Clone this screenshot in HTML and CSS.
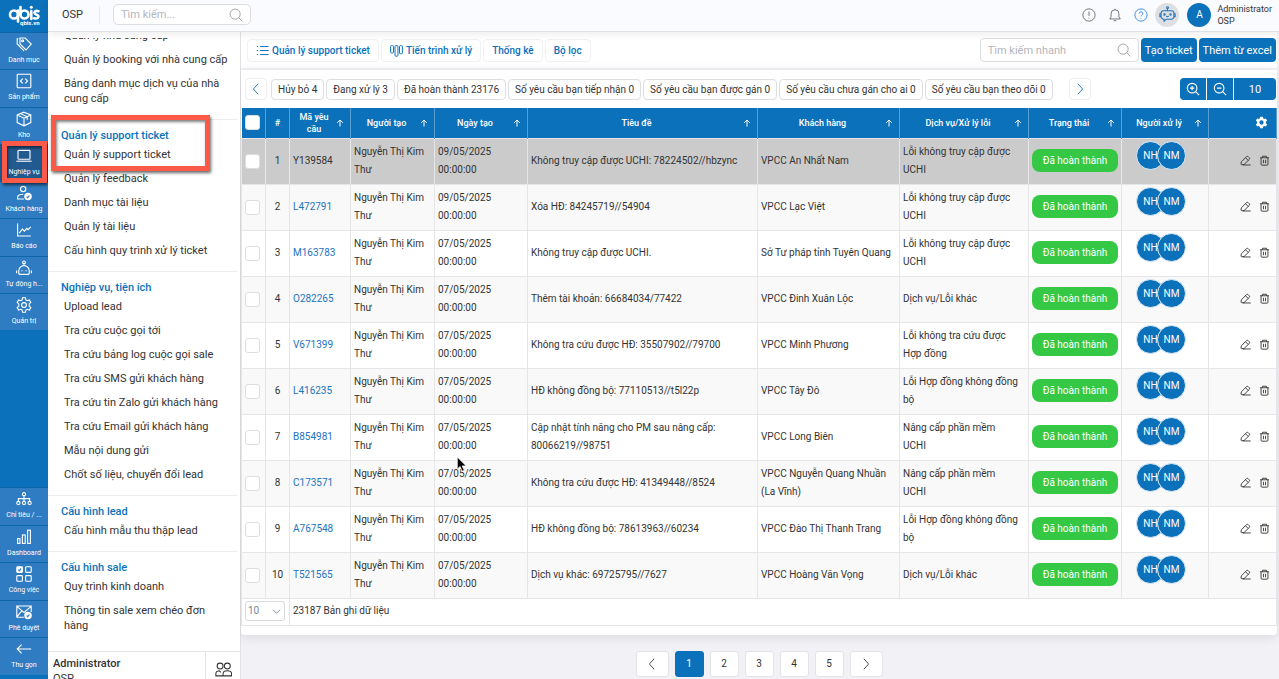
FILE: index.html
```html
<!DOCTYPE html>
<html lang="vi">
<head>
    <meta charset="UTF-8">
    <meta name="viewport" content="width=device-width, initial-scale=1.0">
    <title>Quản lý support ticket</title>
    <link rel="stylesheet" href="styles.css">
</head>
<body>
    <!-- shared icons -->
    <svg class="sprite" aria-hidden="true">
        <symbol id="i-search" viewBox="0 0 16 16"><circle cx="7" cy="7" r="5.8"/><path d="M11.200 11.200l4 4"/></symbol>
        <symbol id="i-left" viewBox="0 0 16 16"><path d="M10.5 2L5 8l5.5 6"/></symbol>
        <symbol id="i-right" viewBox="0 0 16 16"><path d="M5.5 2L11 8l-5.5 6"/></symbol>
        <symbol id="i-sort" viewBox="0 0 8 8"><path d="M4 7.5V1M1.2 3.8L4 1l2.8 2.8"/></symbol>
        <symbol id="i-edit" viewBox="0 0 16 16"><path d="M4 14.500h11.500M1.500 13.200l.3-3.200 7.700-7.600q1.200-1 2.400 0l1.600 1.600q1 1.200 0 2.400L5.800 14H2.300q-.8 0-.8-.8zM8 4l4 4"/></symbol>
        <symbol id="i-trash" viewBox="0 0 16 16"><path d="M1.500 4h13M5 4V1.8h6V4M3 4v9.5q0 1.3 1.3 1.3h7.4q1.3 0 1.3-1.3V4M6.5 7v5M9.5 7v5"/></symbol>
        <symbol id="i-robot" viewBox="0 0 20 20"><path d="M10 3v2.500M5.500 5.500h9a3 3 0 0 1 3 3v4a3 3 0 0 1-3 3H8.500L6 18v-2.500h-.5a3 3 0 0 1-3-3v-4a3 3 0 0 1 3-3zM2.500 9H1v3.500h1.500M17.500 9H19v3.500h-1.500M8.500 12q1.500 1.300 3 0"/><circle cx="10" cy="2" r="1.100"/><circle cx="6.500" cy="10" r=".8"/><circle cx="13.500" cy="10" r=".8"/></symbol>
    </svg>

    <div class="app">
        <nav class="rail">
            <a class="logo" href="#" aria-label="qbis.vn">
                <svg viewBox="0 0 48 32">
                    <g fill="none" stroke="#fff" stroke-width="2.600" stroke-linecap="round">
                        <circle cx="14" cy="14.500" r="4"/><path d="M18 10.500v11"/>
                        <path d="M20.500 7v8"/><circle cx="24.500" cy="14.500" r="4"/>
                        <path d="M31.300 11v8M38.500 11.200c-4-1.300-5.300 2-2.500 3.200 4 1 3 5-2 3.900"/>
                    </g>
                    <circle cx="31.300" cy="7.300" r="1.500" fill="#fff"/>
                    <text x="20" y="25">qbis.vn</text>
                </svg>
            </a>
            <div class="rail-group">
                <a class="rail-item" href="#"><svg viewBox="0 0 20 20"><path d="M5 2.500h6.500l7.500 7.500-6.500 7.500L5 10zM3 3.500H1.500V10l8.500 8.500"/><circle cx="8.300" cy="6" r="1.200"/></svg><span>Danh mục</span></a>
                <a class="rail-item" href="#"><svg viewBox="0 0 20 20"><rect x="1.500" y="1.500" width="17" height="17" rx="1"/><path d="M8.500 7L5.500 10l3 3M11.500 7l3 3-3 3"/></svg><span>Sản phẩm</span></a>
                <a class="rail-item" href="#"><svg viewBox="0 0 20 20"><path d="M10 1.500l8.500 3.500v9.500L10 18.500l-8.500-4V5zM1.500 5l8.500 4 8.500-4M10 9v9.500M5.500 3.200l8.500 4V11"/></svg><span>Kho</span></a>
                <a class="rail-item active" href="#"><svg viewBox="0 0 20 20"><rect x="2.500" y="3" width="15" height="11" rx="1"/><path d="M.5 16.500h19"/></svg><span>Nghiệp vụ</span></a>
                <a class="rail-item" href="#"><svg viewBox="0 0 20 20"><circle cx="9" cy="5" r="3.300"/><path d="M10 17.500H2V15.500q0-4 7-4"/><circle cx="15" cy="14.500" r="4" fill="#fff"/><path class="tick" d="M13.300 14.500l1.300 1.300 2.200-2.600"/></svg><span>Khách hàng</span></a>
                <a class="rail-item" href="#"><svg viewBox="0 0 20 20"><path d="M2 2v15.500H18.500M4 14l4-5 2.500 2.500 3-3.500 1.500 1.500L18.500 6"/></svg><span>Báo cáo</span></a>
                <a class="rail-item" href="#"><svg viewBox="0 0 20 20"><path d="M10 4v3M3.500 17v-3.500a6.500 6.500 0 0 1 13 0V17q0 1-1 1h-11q-1 0-1-1zM.8 13v3.500M19.200 13v3.500"/><circle cx="10" cy="3" r="1.700"/><path d="M7.500 13v1M12.500 13v1" stroke-width="2.200"/></svg><span>Tự động h...</span></a>
                <a class="rail-item" href="#"><svg viewBox="0 0 20 20"><path d="M8.200 1h3.600l.5 2.600 1.800 1 2.600-.9 1.800 3.100-2 1.800v2.800l2 1.800-1.800 3.100-2.600-.9-1.800 1-.5 2.600H8.200l-.5-2.600-1.800-1-2.600.9-1.800-3.100 2-1.800V8.600l-2-1.800 1.800-3.100 2.600.9 1.800-1z"/><circle cx="10" cy="10" r="3"/></svg><span>Quản trị</span></a>
            </div>
            <div class="rail-group rail-bottom">
                <a class="rail-item" href="#"><svg viewBox="0 0 20 20"><circle cx="10" cy="4" r="2"/><circle cx="3" cy="15" r="2"/><circle cx="10" cy="15" r="2"/><circle cx="17" cy="15" r="2"/><path d="M10 6v7M3 13v-3.500h14V13"/></svg><span>Chỉ tiêu / ...</span></a>
                <a class="rail-item" href="#"><svg viewBox="0 0 20 20"><rect x="2" y="12" width="3" height="6"/><rect x="8" y="7.500" width="3.500" height="10.500"/><rect x="14.500" y="1.500" width="3.500" height="16.500"/></svg><span>Dashboard</span></a>
                <a class="rail-item" href="#"><svg viewBox="0 0 20 20"><rect x="1" y="1" width="7" height="7" rx="1" fill="#fff"/><rect x="12" y="1" width="7" height="7" rx="1"/><rect x="1" y="12" width="7" height="7" rx="1"/><rect x="12" y="12" width="7" height="7" rx="1"/><path class="tick" d="M2.800 4.500l1.500 1.500 2-3"/></svg><span>Công việc</span></a>
                <a class="rail-item" href="#"><svg viewBox="0 0 20 20"><path d="M10 16.500H1v-14h18V10M1 3l9 7.500L19 3M1 16l6-7"/><circle cx="15" cy="14.500" r="4" fill="#fff"/><path class="tick" d="M13.300 14.500l1.300 1.300 2.200-2.600"/></svg><span>Phê duyệt</span></a>
                <a class="rail-item" href="#"><svg viewBox="0 0 20 20"><path d="M19 10H1.500M7 4.500L1.500 10 7 15.500"/></svg><span>Thu gọn</span></a>
            </div>
            <div class="mark mark-rail"></div>
        </nav>

        <div class="page">
            <header class="topbar">
                <span class="brand">OSP</span>
                <label class="search top-search">
                    <input type="text" placeholder="Tìm kiếm..." aria-label="Tìm kiếm">
                    <svg class="ico"><use href="#i-search"/></svg>
                </label>
                <div class="top-actions">
                    <button class="icon-btn" aria-label="Thông báo"><svg class="ico" viewBox="0 0 16 16"><circle cx="8" cy="8" r="7"/><path d="M8 4v5M8 11v1"/></svg></button>
                    <button class="icon-btn" aria-label="Chuông"><svg class="ico" viewBox="0 0 16 16"><path d="M2 12.500h12L12.500 10V6.500a4.500 4.500 0 0 0-9 0V10zM6.500 14.500h3M8 2V.8"/></svg></button>
                    <button class="icon-btn help" aria-label="Trợ giúp"><svg class="ico" viewBox="0 0 16 16"><circle cx="8" cy="8" r="7"/><path d="M6 6.300a2 2 0 1 1 2.800 1.900Q8 8.600 8 9.500M8 11.300v.9"/></svg></button>
                    <button class="icon-btn bot" aria-label="Trợ lý"><svg class="ico"><use href="#i-robot"/></svg></button>
                    <span class="avatar">A</span>
                    <div class="user"><div>Administrator</div><div>OSP</div></div>
                </div>
            </header>

            <div class="body">
                <aside class="menu">
                    <div class="menu-scroll">
                        <div class="menu-list">
                            <div class="menu-group first">
                                <a href="#">Quản lý nhà cung cấp</a>
                                <a href="#">Quản lý booking với nhà cung cấp</a>
                                <a href="#">Bảng danh mục dịch vụ của nhà cung cấp</a>
                            </div>
                            <div class="menu-group">
                                <h3>Quản lý support ticket</h3>
                                <a href="#">Quản lý support ticket</a>
                                <a href="#">Quản lý feedback</a>
                                <a href="#">Danh mục tài liệu</a>
                                <a href="#">Quản lý tài liệu</a>
                                <a href="#">Cấu hình quy trình xử lý ticket</a>
                            </div>
                            <div class="menu-group">
                                <h3>Nghiệp vụ, tiện ích</h3>
                                <a href="#">Upload lead</a>
                                <a href="#">Tra cứu cuộc gọi tới</a>
                                <a href="#">Tra cứu bảng log cuộc gọi sale</a>
                                <a href="#">Tra cứu SMS gửi khách hàng</a>
                                <a href="#">Tra cứu tin Zalo gửi khách hàng</a>
                                <a href="#">Tra cứu Email gửi khách hàng</a>
                                <a href="#">Mẫu nội dung gửi</a>
                                <a href="#">Chốt số liệu, chuyển đổi lead</a>
                            </div>
                            <div class="menu-group">
                                <h3>Cấu hình lead</h3>
                                <a href="#">Cấu hình mẫu thu thập lead</a>
                            </div>
                            <div class="menu-group">
                                <h3>Cấu hình sale</h3>
                                <a href="#">Quy trình kinh doanh</a>
                                <a href="#">Thông tin sale xem chéo đơn hàng</a>
                            </div>
                        </div>
                    </div>
                    <div class="menu-user">
                        <div class="menu-name"><b>Administrator</b><span>OSP</span></div>
                        <button class="switch-user" aria-label="Đổi người dùng"><svg class="ico" viewBox="0 0 20 20"><circle cx="6" cy="6" r="3.500"/><circle cx="14.500" cy="6" r="3.500"/><path d="M9.500 17.500H1V15q0-3 4-3.500l2 2M9.500 17.500V15q0-3.500 5-3.500t5 3.500v2.500z"/></svg></button>
                    </div>
                    <div class="mark mark-menu"></div>
                </aside>

                <main class="main">
                    <div class="toolbar">
                        <button class="tab"><svg class="ico" viewBox="0 0 16 16"><path d="M1 3h1.500M1 8h1.500M1 13h1.500M5 3h10.500M5 8h10.500M5 13h10.500"/></svg>Quản lý support ticket</button>
                        <button class="tab"><svg class="ico" viewBox="0 0 16 16"><rect x=".7" y="2" width="3.600" height="9" rx="1"/><rect x="6.200" y="2" width="3.600" height="13" rx="1"/><rect x="11.700" y="2" width="3.600" height="10" rx="1"/></svg>Tiến trình xử lý</button>
                        <button class="tab">Thống kê</button>
                        <button class="tab">Bộ lọc</button>
                        <label class="search quick-search">
                            <input type="text" placeholder="Tìm kiếm nhanh" aria-label="Tìm kiếm nhanh">
                            <svg class="ico"><use href="#i-search"/></svg>
                        </label>
                        <button class="primary">Tạo ticket</button>
                        <button class="primary">Thêm từ excel</button>
                    </div>

                    <section class="card">
                        <div class="filters">
                            <button class="arrow" aria-label="Trước"><svg class="ico"><use href="#i-left"/></svg></button>
                            <button class="chip">Hủy bỏ 4</button>
                            <button class="chip">Đang xử lý 3</button>
                            <button class="chip">Đã hoàn thành 23176</button>
                            <button class="chip">Số yêu cầu bạn tiếp nhận 0</button>
                            <button class="chip">Số yêu cầu bạn được gán 0</button>
                            <button class="chip">Số yêu cầu chưa gán cho ai 0</button>
                            <button class="chip">Số yêu cầu bạn theo dõi 0</button>
                            <button class="arrow next" aria-label="Sau"><svg class="ico"><use href="#i-right"/></svg></button>
                            <div class="zoom">
                                <button aria-label="Phóng to"><svg class="ico" viewBox="0 0 16 16"><circle cx="7" cy="7" r="5.500"/><path d="M11 11l4 4M4.500 7h5M7 4.500v5"/></svg></button>
                                <button aria-label="Thu nhỏ"><svg class="ico" viewBox="0 0 16 16"><circle cx="7" cy="7" r="5.500"/><path d="M11 11l4 4M4.500 7h5"/></svg></button>
                                <button class="size">10</button>
                            </div>
                        </div>

                        <table class="grid">
                            <colgroup>
                                <col class="c-check"><col class="c-no"><col class="c-code"><col class="c-creator"><col class="c-date"><col>
                                <col class="c-customer"><col class="c-service"><col class="c-status"><col class="c-owner"><col class="c-tools">
                            </colgroup>
                            <thead>
                                <tr>
                                    <th class="check"><input type="checkbox" aria-label="Chọn tất cả"></th>
                                    <th>#</th>
                                    <th><div class="head"><span>Mã yêu cầu</span><svg><use href="#i-sort"/></svg></div></th>
                                    <th><div class="head"><span>Người tạo</span><svg><use href="#i-sort"/></svg></div></th>
                                    <th><div class="head"><span>Ngày tạo</span><svg><use href="#i-sort"/></svg></div></th>
                                    <th><div class="head"><span>Tiêu đề</span><svg><use href="#i-sort"/></svg></div></th>
                                    <th><div class="head"><span>Khách hàng</span><svg><use href="#i-sort"/></svg></div></th>
                                    <th><div class="head"><span>Dịch vụ/Xử lý lỗi</span><svg><use href="#i-sort"/></svg></div></th>
                                    <th><div class="head"><span>Trạng thái</span><svg><use href="#i-sort"/></svg></div></th>
                                    <th><div class="head"><span>Người xử lý</span><svg><use href="#i-sort"/></svg></div></th>
                                    <th class="gear"><button aria-label="Cài đặt cột"><svg viewBox="0 0 20 20"><path fill-rule="evenodd" d="M8 1h4l.5 2.600 1.700 1 2.500-.9 2 3.400-2 1.800v2.200l2 1.800-2 3.400-2.500-.9-1.700 1L12 19H8l-.5-2.600-1.700-1-2.500.9-2-3.400 2-1.800V8.900l-2-1.800 2-3.400 2.500.9 1.700-1zM10 6.700a3.300 3.300 0 1 0 0 6.600 3.300 3.300 0 0 0 0-6.600z"/></svg></button></th>
                                </tr>
                            </thead>
                            <tbody id="rows"></tbody>
                            <tfoot>
                                <tr>
                                    <td colspan="2"><select aria-label="Số dòng"><option>10</option><option>20</option><option>50</option></select></td>
                                    <td colspan="9">23187 Bản ghi dữ liệu</td>
                                </tr>
                            </tfoot>
                        </table>
                    </section>

                    <div class="pager">
                        <button class="step" aria-label="Trang trước"><svg class="ico"><use href="#i-left"/></svg></button>
                        <button class="current">1</button>
                        <button>2</button>
                        <button>3</button>
                        <button>4</button>
                        <button>5</button>
                        <button class="step" aria-label="Trang sau"><svg class="ico"><use href="#i-right"/></svg></button>
                    </div>
                </main>
            </div>
        </div>
    </div>

    <svg class="cursor" viewBox="0 0 12 18"><path d="M1 1v13l3-2.800 2.200 5 2.200-1-2.200-4.700H10.500z"/></svg>

    <script src="script.js"></script>
</body>
</html>
```

FILE: styles.css
```css
* {
    box-sizing: border-box;
}
body {
    margin: 0;
    font-family: Roboto, "Liberation Sans", sans-serif;
    font-size: 11px;
    color: #333;
    background: #f1f1f6;
}
a {
    color: inherit;
    text-decoration: none;
}
button, input, select {
    font: inherit;
    color: inherit;
}
button {
    padding: 0;
    border: none;
    background: none;
    cursor: pointer;
}
.sprite {
    position: absolute;
    width: 0;
    height: 0;
}
.ico {
    width: 14px;
    height: 14px;
    flex: none;
    fill: none;
    stroke: currentColor;
    stroke-width: 1;
}
.app {
    display: flex;
    height: 100vh;
    overflow: hidden;
}

/* left rail */
.rail {
    position: relative;
    display: flex;
    flex-direction: column;
    width: 48px;
    flex: none;
    background: #0b71bb;
    color: #fff;
}
.logo {
    height: 32px;
    flex: none;
}
.logo svg {
    display: block;
    width: 48px;
    height: 32px;
}
.logo text {
    font-size: 6px;
    font-weight: 700;
    fill: #fff;
}
.rail-group {
    display: flex;
    flex-direction: column;
    height: 298px;
    flex: none;
}
.rail-bottom {
    height: 188px;
    margin-top: auto;
    margin-bottom: 4px;
}
.rail-item {
    display: flex;
    flex: 1;
    flex-direction: column;
    align-items: center;
    gap: 3px;
    padding-top: 3px;
    background: #2f7cc2;
    border-top: 1px solid #0b66ab;
    font-size: 7px;
    line-height: 10px;
    white-space: nowrap;
}
.rail-item svg {
    width: 16px;
    height: 16px;
    fill: none;
    stroke: #fff;
    stroke-width: 1.4;
}
.rail-item .tick {
    stroke: #2f7cc2;
}
.rail-item.active {
    background: #225a8f;
}

/* red callouts */
.mark {
    position: absolute;
    border: 5px solid #fb5a49;
    box-shadow: 1px 2px 3px rgba(0, 0, 0, .6), inset 1px 2px 3px rgba(0, 0, 0, .5);
    pointer-events: none;
}
.mark-rail {
    left: 2px;
    top: 141px;
    width: 45px;
    height: 42px;
}
.mark-menu {
    left: 3px;
    top: 83px;
    width: 159px;
    height: 56px;
}

/* top bar */
.page {
    display: flex;
    flex: 1;
    flex-direction: column;
    min-width: 0;
}
.topbar {
    position: relative;
    z-index: 1;
    display: flex;
    align-items: center;
    height: 32px;
    flex: none;
    padding: 0 7px 2px 14px;
    background: #fafbfe;
    border-bottom: 1px solid #e0e1e4;
    box-shadow: 0 2px 8px rgba(0, 0, 0, .08);
}
.brand {
    padding-right: 16px;
    border-right: 1px solid #e8e9ec;
    line-height: 18px;
}
.search {
    display: flex;
    align-items: center;
    border: 1px solid #dcdde0;
    border-radius: 4px;
    color: #999;
    background: #fff;
}
.search input {
    flex: 1;
    min-width: 0;
    padding: 0 0 0 7px;
    border: none;
    outline: none;
    background: none;
}
.search input::placeholder {
    color: #b4b6bb;
}
.top-search {
    width: 138px;
    height: 21px;
    margin-left: 13px;
    padding-right: 7px;
    border-radius: 5px;
}
.top-actions {
    display: flex;
    align-items: center;
    gap: 12px;
    margin-left: auto;
}
.icon-btn {
    display: flex;
    color: #666;
}
.help {
    color: #2a86e8;
}
.bot {
    align-items: center;
    justify-content: center;
    width: 24px;
    height: 24px;
    margin-left: -5px;
    border-radius: 50%;
    background: #dedfe2;
    color: #1d74c0;
}
.bot .ico {
    width: 17px;
    height: 17px;
    stroke-width: 1.2;
}
.avatar {
    width: 24px;
    height: 24px;
    margin-left: -4px;
    border-radius: 50%;
    background: #0b71bb;
    color: #fff;
    font-size: 10px;
    line-height: 24px;
    text-align: center;
}
.user {
    margin-left: -6px;
    font-size: 9px;
    line-height: 12px;
}
.body {
    display: flex;
    flex: 1;
    min-height: 0;
}

/* second level menu */
.menu {
    position: relative;
    display: flex;
    flex-direction: column;
    width: 192px;
    flex: none;
    padding-top: 6px;
    background: #fff;
}
.menu-scroll {
    flex: 1;
    min-height: 0;
    margin-right: 3px;
    overflow: hidden;
}
.menu-list {
    margin-top: -14px;
}
.menu-group {
    padding: 8px 0;
    border-bottom: 1px solid #ececee;
}
.menu-group.first {
    padding-top: 0;
}
.menu-group:last-child {
    border-bottom: none;
}
.menu-group h3 {
    margin: 0;
    padding-left: 13px;
    color: #0b71bb;
    font-size: 11px;
    font-weight: 500;
    line-height: 15px;
}
.menu-group a {
    display: block;
    padding: 4px 8px 5px 16px;
    line-height: 15px;
}
.menu-user {
    display: flex;
    height: 28px;
    flex: none;
    border-top: 1px solid #e4e4e6;
    overflow: hidden;
}
.menu-name {
    flex: 1;
    padding: 4px 5px;
    line-height: 15px;
}
.menu-name b {
    font-weight: 500;
}
.menu-name span {
    display: block;
}
.switch-user {
    display: flex;
    align-items: center;
    justify-content: center;
    width: 35px;
    padding-top: 8px;
    border-left: 1px solid #e4e4e6;
}
.switch-user .ico {
    width: 17px;
    height: 17px;
    stroke-width: 1.2;
}

/* main area */
.main {
    flex: 1;
    min-width: 0;
    padding-right: 2px;
    border-left: 1px solid #e2e2e6;
    box-shadow: 0 0 8px rgba(0, 0, 0, .12);
}
.toolbar {
    display: flex;
    align-items: center;
    gap: 2px;
    height: 36px;
    padding: 0 1px 0 6px;
    background: #fff;
}
.tab {
    display: flex;
    align-items: center;
    gap: 3px;
    height: 23px;
    padding: 0 8px;
    border: 1px solid #f1f1f4;
    border-radius: 4px;
    color: #0b71bb;
    font-size: 10px;
    font-weight: 500;
    white-space: nowrap;
}
.tab .ico {
    width: 13px;
    height: 13px;
    stroke-width: 1.2;
}
.quick-search {
    width: 159px;
    height: 24px;
    margin-left: auto;
    padding-right: 7px;
}
.primary {
    height: 24px;
    padding: 0 4px;
    border-radius: 4px;
    background: #0b71bb;
    color: #fff;
    white-space: nowrap;
}
.card {
    margin-top: 2px;
    padding-bottom: 9px;
    border-radius: 0 0 4px 4px;
    background: #fff;
    box-shadow: 0 2px 12px rgba(0, 0, 0, .1);
}
.filters {
    display: flex;
    align-items: center;
    gap: 2px;
    height: 38px;
    padding: 0 1px 0 4px;
}
.chip {
    height: 21px;
    padding: 0 6px;
    border: 1px solid #dddee1;
    border-radius: 4px;
    font-size: 10px;
    white-space: nowrap;
}
.arrow {
    display: flex;
    align-items: center;
    justify-content: center;
    width: 22px;
    height: 22px;
    margin-right: 2px;
    border: 1px solid #eeeef1;
    border-radius: 4px;
    color: #0b71bb;
}
.arrow.next {
    margin-left: 14px;
}
.zoom {
    display: flex;
    gap: 1px;
    height: 22px;
    margin-left: auto;
    border-radius: 4px;
    overflow: hidden;
}
.zoom button {
    display: flex;
    align-items: center;
    justify-content: center;
    width: 26px;
    background: #0b71bb;
    color: #fff;
}
.zoom .ico {
    stroke-width: 1.3;
}
.zoom .size {
    width: 42px;
}

/* ticket grid */
.grid {
    width: 100%;
    table-layout: fixed;
    border-collapse: collapse;
    font-size: 10px;
}
.c-check, .c-no { width: 24px; }
.c-code { width: 61px; }
.c-creator { width: 84px; }
.c-date { width: 93px; }
.c-customer { width: 142px; }
.c-service { width: 129px; }
.c-status { width: 93px; }
.c-owner { width: 87px; }
.c-tools { width: 68px; }
.grid th {
    height: 30px;
    padding: 0;
    border-right: 1px solid #5a9fd2;
    background: #0b71bb;
    color: #fff;
    font-size: 9px;
    font-weight: 500;
    line-height: 12px;
}
.head {
    display: flex;
    align-items: center;
    padding: 0 6px 0 2px;
}
.head span {
    flex: 1;
    padding: 0 6px;
}
.head svg {
    width: 8px;
    height: 8px;
    flex: none;
    fill: none;
    stroke: #fff;
    stroke-width: 1;
}
.grid .gear {
    padding-right: 8px;
    text-align: right;
}
.gear button {
    display: inline-flex;
    vertical-align: middle;
}
.gear svg {
    width: 13px;
    height: 13px;
    fill: #fff;
}
.grid td {
    padding: 0 3px 1px;
    border: 1px solid #e6e6e8;
    line-height: 18px;
}
.grid tbody td {
    height: 46px;
}
.grid tbody tr:nth-child(even) {
    background: #f9f9f9;
}
.grid tbody tr.selected {
    background: #cbcbcb;
}
.grid .no {
    padding: 0 0 1px;
    text-align: center;
}
.grid .check {
    padding: 0;
    text-align: center;
}
.grid .service {
    padding-right: 8px;
}
.check input {
    display: block;
    appearance: none;
    width: 15px;
    height: 15px;
    margin: 0 auto 0 3px;
    border: 1px solid #dddee1;
    border-radius: 3px;
    background: #fff;
}
.code {
    color: #1d74c0;
}
.selected .code {
    color: #333;
}
.badge {
    display: block;
    border-radius: 8px;
    background: #35c844;
    color: #fff;
    line-height: 23px;
    text-align: center;
}
.owners {
    display: flex;
    padding: 0 0 10px 11px;
}
.owner {
    width: 29px;
    height: 29px;
    margin-right: -8px;
    border: 1px solid #e4eef6;
    border-radius: 50%;
    background: #0b71bb;
    color: #fff;
    line-height: 27px;
    text-align: center;
}
.tools {
    display: flex;
    justify-content: flex-end;
    gap: 8px;
    padding-right: 3px;
}
.tools button {
    display: flex;
}
.tools .ico {
    width: 11px;
    height: 11px;
    stroke-width: 1.3;
}
.grid tfoot td {
    height: 27px;
}
.grid select {
    display: block;
    appearance: none;
    width: 40px;
    height: 20px;
    padding: 0 2px;
    border: 1px solid #d9dade;
    border-radius: 3px;
    color: #7a8699;
    background: #fff url("data:image/svg+xml,%3Csvg xmlns='http://www.w3.org/2000/svg' viewBox='0 0 10 10'%3E%3Cpath d='M1 3l4 4 4-4' fill='none' stroke='%237a8699'/%3E%3C/svg%3E") no-repeat right 3px center / 9px 9px;
}

/* pagination */
.pager {
    display: flex;
    justify-content: center;
    gap: 6px;
    padding-top: 16px;
}
.pager button {
    display: flex;
    align-items: center;
    justify-content: center;
    width: 29px;
    height: 26px;
    border: 1px solid #e4e4e8;
    border-radius: 3px;
    background: #fff;
    font-size: 10px;
}
.pager .step {
    width: 33px;
}
.pager .current {
    border-color: #0b71bb;
    background: #0b71bb;
    color: #fff;
}
.cursor {
    position: absolute;
    left: 456px;
    top: 456px;
    width: 12px;
    height: 17px;
    fill: #000;
    stroke: #fff;
    stroke-width: .8;
    pointer-events: none;
}
```

FILE: script.js
```js
const tickets = [
    ['Y139584', '09/05/2025', 'Không truy cập được UCHI: 78224502//hbzync', 'VPCC An Nhất Nam', 'Lỗi không truy cập được UCHI'],
    ['L472791', '09/05/2025', 'Xóa HĐ: 84245719//54904', 'VPCC Lạc Việt', 'Lỗi không truy cập được UCHI'],
    ['M163783', '07/05/2025', 'Không truy cập được UCHI.', 'Sở Tư pháp tỉnh Tuyên Quang', 'Lỗi không truy cập được UCHI'],
    ['O282265', '07/05/2025', 'Thêm tài khoản: 66684034/77422', 'VPCC Đinh Xuân Lộc', 'Dịch vụ/Lỗi khác'],
    ['V671399', '07/05/2025', 'Không tra cứu được HĐ: 35507902//79700', 'VPCC Minh Phương', 'Lỗi không tra cứu được Hợp đồng'],
    ['L416235', '07/05/2025', 'HĐ không đồng bộ: 77110513//t5l22p', 'VPCC Tây Đô', 'Lỗi Hợp đồng không đồng bộ'],
    ['B854981', '07/05/2025', 'Cập nhật tính năng cho PM sau nâng cấp: 80066219//98751', 'VPCC Long Biên', 'Nâng cấp phần mềm UCHI'],
    ['C173571', '07/05/2025', 'Không tra cứu được HĐ: 41349448//8524', 'VPCC Nguyễn Quang Nhuần (La Vĩnh)', 'Nâng cấp phần mềm UCHI'],
    ['A767548', '07/05/2025', 'HĐ không đồng bộ: 78613963//60234', 'VPCC Đào Thị Thanh Trang', 'Lỗi Hợp đồng không đồng bộ'],
    ['T521565', '07/05/2025', 'Dịch vụ khác: 69725795//7627', 'VPCC Hoàng Văn Vọng', 'Dịch vụ/Lỗi khác']
];

document.getElementById('rows').innerHTML = tickets.map(([code, date, title, customer, service], i) => `
    <tr class="${i === 0 ? 'selected' : ''}">
        <td class="check"><input type="checkbox" aria-label="Chọn ${code}"></td>
        <td class="no">${i + 1}</td>
        <td><a class="code" href="#">${code}</a></td>
        <td>Nguyễn Thị Kim Thư</td>
        <td>${date} 00:00:00</td>
        <td>${title}</td>
        <td>${customer}</td>
        <td class="service">${service}</td>
        <td><span class="badge">Đã hoàn thành</span></td>
        <td><div class="owners"><span class="owner">NH</span><span class="owner">NM</span></div></td>
        <td>
            <div class="tools">
                <button aria-label="Sửa"><svg class="ico"><use href="#i-edit"/></svg></button>
                <button aria-label="Xóa"><svg class="ico"><use href="#i-trash"/></svg></button>
            </div>
        </td>
    </tr>
`).join('');
```
